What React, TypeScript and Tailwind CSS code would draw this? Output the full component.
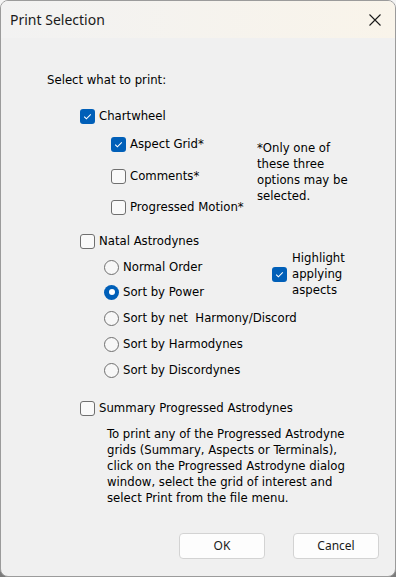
import React from "react";

const Check = ({ checked, label }: { checked?: boolean; label?: React.ReactNode }) => (
  <div className="flex items-center gap-[4px]">
    {checked ? (
      <span className="flex h-[15px] w-[15px] shrink-0 items-center justify-center rounded-[3px] bg-[#005fb8]">
        <svg width="15" height="15" viewBox="0 0 15 15">
          <path d="M4.2 7.6 L6.4 9.8 L10.8 5.4" fill="none" stroke="#ffffff" strokeWidth="1.1" />
        </svg>
      </span>
    ) : (
      <span className="h-[15px] w-[15px] shrink-0 rounded-[3px] border border-[#6f6f6f] bg-[#f9f9f9]" />
    )}
    {label && <span className="whitespace-pre">{label}</span>}
  </div>
);

const Radio = ({ checked, label, className }: { checked?: boolean; label: string; className?: string }) => (
  <div className={"flex h-4 items-center gap-[4px] " + (className ?? "")}>
    {checked ? (
      <span className="flex h-[15px] w-[15px] shrink-0 items-center justify-center rounded-full bg-[#005fb8]">
        <span className="h-[6px] w-[6px] rounded-full bg-white" />
      </span>
    ) : (
      <span className="h-[15px] w-[15px] shrink-0 rounded-full border border-[#6f6f6f] bg-[#f7f7f7]" />
    )}
    <span className="whitespace-pre">{label}</span>
  </div>
);

export default function App() {
  return (
    <div className="h-[577px] w-[396px] bg-gradient-to-b from-[#f4f4f4] via-[#d8d8d8] to-[#7a7a7a]">
      <div className="flex h-[577px] w-[396px] flex-col overflow-hidden rounded-[8px] border border-[#9b9b9b] bg-[#f0f0f0]">
        {/* title bar */}
        <div className="flex h-[37px] shrink-0 items-center justify-between bg-gradient-to-r from-[#f2f2f2] to-[#f9f4ea] pl-[9px] pr-[14px]">
          <span className="font-['Noto_Sans',sans-serif] text-[14px] text-[#1a1a1a]">Print Selection</span>
          <svg width="12" height="12" viewBox="0 0 12 12">
            <path d="M0.5 0.5 L11.5 11.5 M11.5 0.5 L0.5 11.5" stroke="#1a1a1a" strokeWidth="1.1" />
          </svg>
        </div>

        {/* body */}
        <div className="flex flex-1 flex-col font-['DejaVu_Sans_Condensed','DejaVu_Sans',sans-serif] text-[13px] leading-4 text-black [font-stretch:condensed]">
          <div className="ml-[46px] mt-[34px]">Select what to print:</div>

          <div className="ml-[79px] mt-[20px] h-4">
            <Check checked label="Chartwheel" />
          </div>

          <div className="mt-[12px] flex">
            <div className="ml-[110px] flex w-[146px] flex-col">
              <div className="h-4">
                <Check checked label="Aspect Grid*" />
              </div>
              <div className="mt-[16px] h-4">
                <Check label="Comments*" />
              </div>
              <div className="mt-[15px] h-4">
                <Check label="Progressed Motion*" />
              </div>
            </div>
            <div className="mt-[4px]">
              <div>*Only one of</div>
              <div>these three</div>
              <div>options may be</div>
              <div>selected.</div>
            </div>
          </div>

          <div className="ml-[79px] mt-[18px] h-4">
            <Check label="Natal Astrodynes" />
          </div>

          <div className="mt-[1px] flex items-start">
            <div className="ml-[103px] flex w-[168px] flex-col pt-[9px]">
              <Radio label="Normal Order" />
              <Radio checked label="Sort by Power" className="mt-[9px]" />
              <Radio label="Sort by net  Harmony/Discord" className="mt-[10px]" />
              <Radio label="Sort by Harmodynes" className="mt-[10px]" />
              <Radio label="Sort by Discordynes" className="mt-[10px]" />
            </div>
            <div className="flex items-center gap-[5px]">
              <Check checked />
              <div>
                <div>Highlight</div>
                <div>applying</div>
                <div>aspects</div>
              </div>
            </div>
          </div>

          <div className="ml-[79px] mt-[22px] h-4">
            <Check label="Summary Progressed Astrodynes" />
          </div>

          <div className="ml-[106px] mt-[10px] whitespace-nowrap">
            <div>To print any of the Progressed Astrodyne</div>
            <div>grids (Summary, Aspects or Terminals),</div>
            <div>click on the Progressed Astrodyne dialog</div>
            <div>window, select the grid of interest and</div>
            <div>select Print from the file menu.</div>
          </div>

          <div className="ml-[178px] mt-[27px] flex gap-[28px] font-['Noto_Sans',sans-serif] text-[12px]">
            <button className="h-[26px] w-[86px] rounded-[4px] border border-[#d3d3d3] bg-[#fdfdfd] text-[#1a1a1a]">OK</button>
            <button className="h-[26px] w-[86px] rounded-[4px] border border-[#d3d3d3] bg-[#fdfdfd] text-[#1a1a1a]">Cancel</button>
          </div>
        </div>
      </div>
    </div>
  );
}
